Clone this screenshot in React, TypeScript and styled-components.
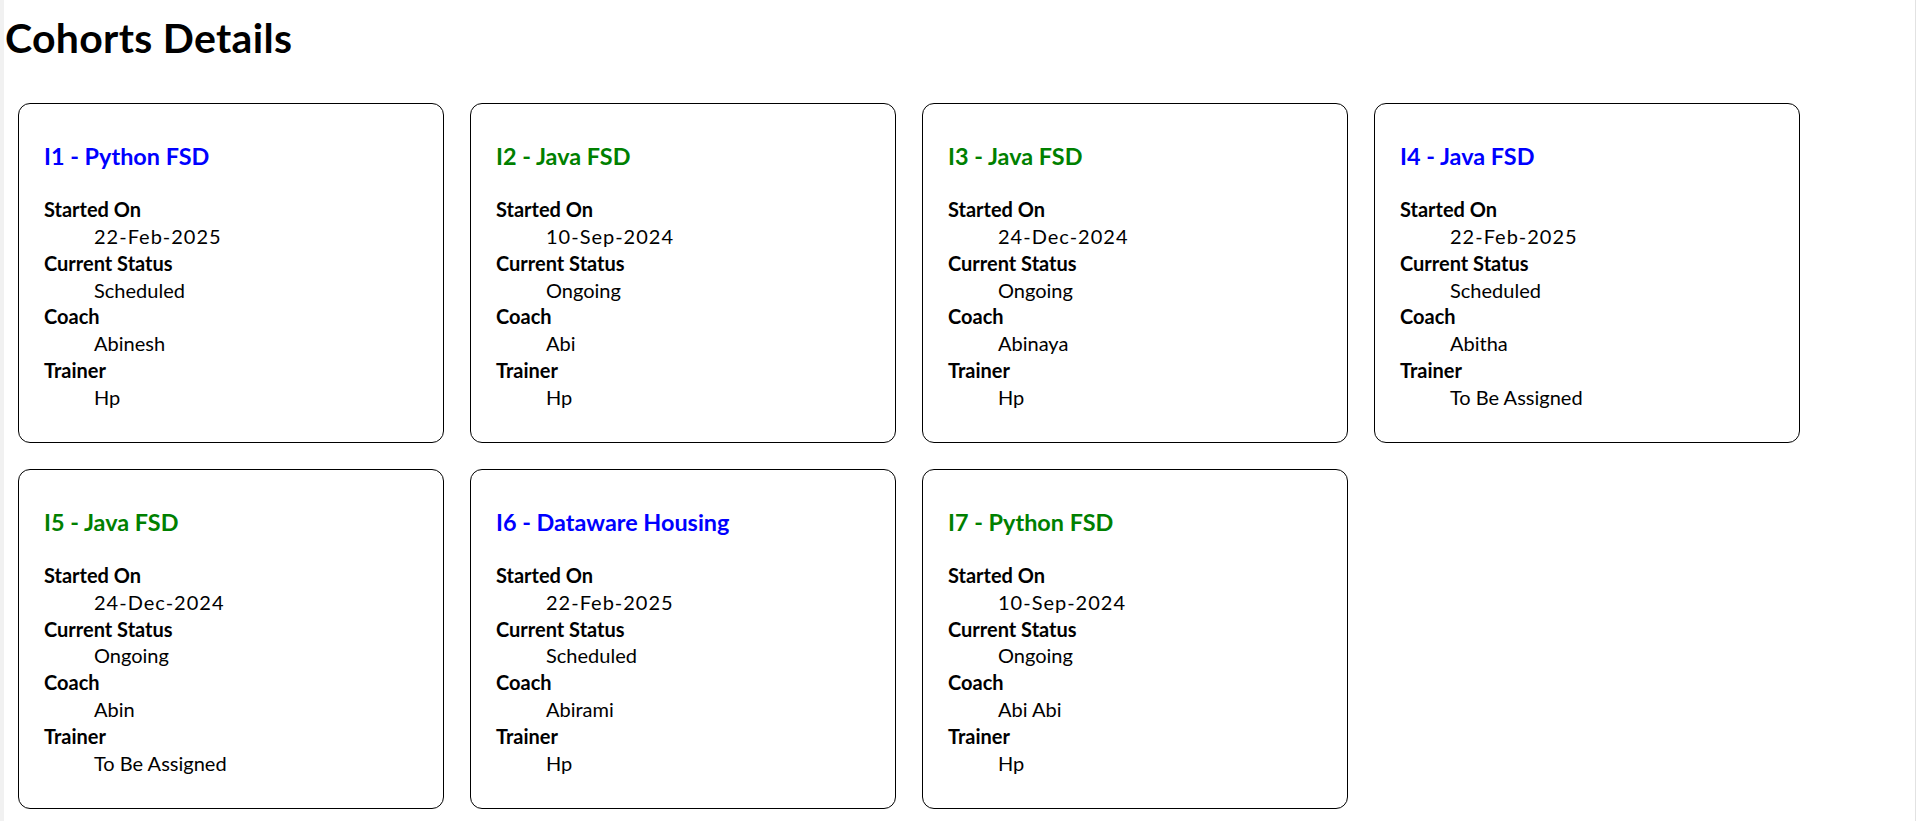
import styled, { createGlobalStyle } from 'styled-components';

type Cohort = {
    code: string;
    name: string;
    startedOn: string;
    status: 'Scheduled' | 'Ongoing';
    coach: string;
    trainer: string;
};

const cohorts: Cohort[] = [
    { code: 'I1', name: 'Python FSD', startedOn: '22-Feb-2025', status: 'Scheduled', coach: 'Abinesh', trainer: 'Hp' },
    { code: 'I2', name: 'Java FSD', startedOn: '10-Sep-2024', status: 'Ongoing', coach: 'Abi', trainer: 'Hp' },
    { code: 'I3', name: 'Java FSD', startedOn: '24-Dec-2024', status: 'Ongoing', coach: 'Abinaya', trainer: 'Hp' },
    { code: 'I4', name: 'Java FSD', startedOn: '22-Feb-2025', status: 'Scheduled', coach: 'Abitha', trainer: 'To Be Assigned' },
    { code: 'I5', name: 'Java FSD', startedOn: '24-Dec-2024', status: 'Ongoing', coach: 'Abin', trainer: 'To Be Assigned' },
    { code: 'I6', name: 'Dataware Housing', startedOn: '22-Feb-2025', status: 'Scheduled', coach: 'Abirami', trainer: 'Hp' },
    { code: 'I7', name: 'Python FSD', startedOn: '10-Sep-2024', status: 'Ongoing', coach: 'Abi Abi', trainer: 'Hp' },
];

const CohortCard = ({ cohort }: { cohort: Cohort }) => (
    <Card>
        <CardTitle $status={cohort.status}>
            {cohort.code} - {cohort.name}
        </CardTitle>
        <Details>
            <Label>Started On</Label>
            <Value $numeric>{cohort.startedOn}</Value>
            <Label>Current Status</Label>
            <Value>{cohort.status}</Value>
            <Label>Coach</Label>
            <Value>{cohort.coach}</Value>
            <Label>Trainer</Label>
            <Value>{cohort.trainer}</Value>
        </Details>
    </Card>
);

const App = () => {
    return (
        <>
            <GlobalStyle />
            <Page>
                <Heading>Cohorts Details</Heading>
                <CardList>
                    {cohorts.map((c) => (
                        <CohortCard key={c.code} cohort={c} />
                    ))}
                </CardList>
            </Page>
        </>
    );
};

export default App;

// Styled Components
const GlobalStyle = createGlobalStyle`
    html, body {
        margin: 0;
        padding: 0;
        background: #fff;
    }

    body {
        font-family: Lato, "Open Sans", sans-serif;
        color: #000;
    }
`;

const Page = styled.div`
    box-sizing: border-box;
    min-height: 100vh;
    width: 1916px;
    border-left: 4px solid #f1f1f1;
    border-right: 1px solid #e2e2e2;
    padding: 11px 0 0 1px;
`;

const Heading = styled.h1`
    margin: 0 0 38px;
    font-size: 41px;
    font-weight: 700;
    line-height: 54px;
    letter-spacing: 0.3px;
`;

const CardList = styled.div`
    display: flex;
    flex-wrap: wrap;
    gap: 26px;
    padding-left: 13px;
`;

const Card = styled.div`
    box-sizing: border-box;
    width: 426px;
    padding: 25px 25px 31px;
    border: 1px solid #000;
    border-radius: 12px;
`;

interface CardTitleProps {
    $status: Cohort['status'];
}

const CardTitle = styled.h3<CardTitleProps>`
    margin: 12px 0 24px;
    font-size: 23.4px;
    font-weight: 700;
    line-height: 31px;
    color: ${(props) => (props.$status === 'Ongoing' ? '#008000' : '#0000ff')};
`;

const Details = styled.dl`
    margin: 0;
    font-size: 20px;
    line-height: 26.86px;
`;

const Label = styled.dt`
    font-weight: 700;
`;

interface ValueProps {
    $numeric?: boolean;
}

const Value = styled.dd<ValueProps>`
    margin-left: 50px;
    letter-spacing: ${(props) => (props.$numeric ? '1px' : 'normal')};
`;
